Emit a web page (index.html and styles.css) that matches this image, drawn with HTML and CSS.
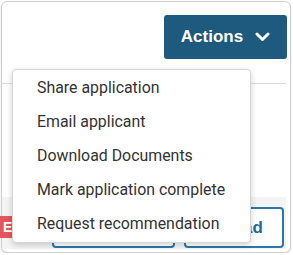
FILE: index.html
```html
<!DOCTYPE html>
<html>
<head>
<meta charset="utf-8">
<link rel="stylesheet" href="styles.css">
</head>
<body>
<div class="card">
  <div class="header">
    <button class="actions">Actions
      <svg class="chev" width="15" height="10" viewBox="0 0 15 10"><path d="M2 2 L7.5 7.5 L13 2" fill="none" stroke="#fff" stroke-width="3" stroke-linecap="round" stroke-linejoin="round"/></svg>
    </button>
  </div>
  <div class="middle"></div>
  <div class="footer">
    <span class="badge">E</span>
    <button class="outline left"></button>
    <button class="outline right">Upload</button>
  </div>
  <ul class="menu">
    <li>Share application</li>
    <li>Email applicant</li>
    <li>Download Documents</li>
    <li>Mark application complete</li>
    <li>Request recommendation</li>
  </ul>
</div>
</body>
</html>
```

FILE: styles.css
```css
html, body {
  margin: 0;
  padding: 0;
  background: #fff;
}
.card {
  position: relative;
  margin: 1px 0 0 1px;
  width: 288px;
  height: 250px;
  border: 1px solid #cfcfcf;
  border-radius: 6px;
  box-shadow: 0 1px 2px rgba(0,0,0,0.15);
  display: flex;
  flex-direction: column;
  background: #fff;
}
.header {
  height: 82px;
  border-bottom: 1px solid #ddd;
  margin-right: 4px;
  display: flex;
  justify-content: flex-end;
  align-items: flex-start;
  padding-top: 13px;
  box-sizing: border-box;
}
.actions {
  width: 123px;
  height: 44px;
  margin-right: -1px;
  background: #1e5a7e;
  border: none;
  border-radius: 3px;
  color: #fff;
  font-family: "Liberation Sans", Arial, sans-serif;
  font-weight: bold;
  font-size: 17px;
  display: flex;
  align-items: center;
  justify-content: center;
  gap: 12px;
  padding: 0;
}
.chev { display: block; }
.middle {
  height: 113px;
}
.footer {
  height: 52px;
  margin-right: 4px;
  background: #f4f4f4;
  display: flex;
  align-items: flex-start;
  padding-top: 10px;
  box-sizing: border-box;
}
.badge {
  margin-top: 9px;
  margin-left: -2px;
  width: 35px;
  height: 22px;
  background: #e5555c;
  color: #fff;
  font-family: "Liberation Sans", Arial, sans-serif;
  font-weight: bold;
  font-size: 14px;
  line-height: 22px;
  padding-left: 3px;
  box-sizing: border-box;
  border-radius: 0 2px 2px 0;
}
.outline {
  height: 41px;
  background: #fff;
  border: 2px solid #2a77a8;
  border-radius: 4px;
  color: #1f6a9a;
  font-family: "Liberation Sans", Arial, sans-serif;
  font-weight: bold;
  font-size: 17px;
  padding: 0;
}
.left {
  margin-left: 17px;
  width: 123px;
}
.right {
  margin-left: 9px;
  width: 100px;
  text-align: center;
}
.menu {
  position: absolute;
  left: 10px;
  top: 67px;
  width: 239px;
  margin: 0;
  padding: 1px 0;
  list-style: none;
  background: #fff;
  border: 1px solid #d6d6d6;
  border-radius: 4px;
  box-shadow: 0 2px 6px rgba(0,0,0,0.18);
  box-sizing: border-box;
}
.menu li {
  height: 34px;
  line-height: 34px;
  padding-left: 24px;
  font-family: Roboto, "Noto Sans", sans-serif;
  font-size: 15.9px;
  color: #333;
  white-space: nowrap;
}
```
